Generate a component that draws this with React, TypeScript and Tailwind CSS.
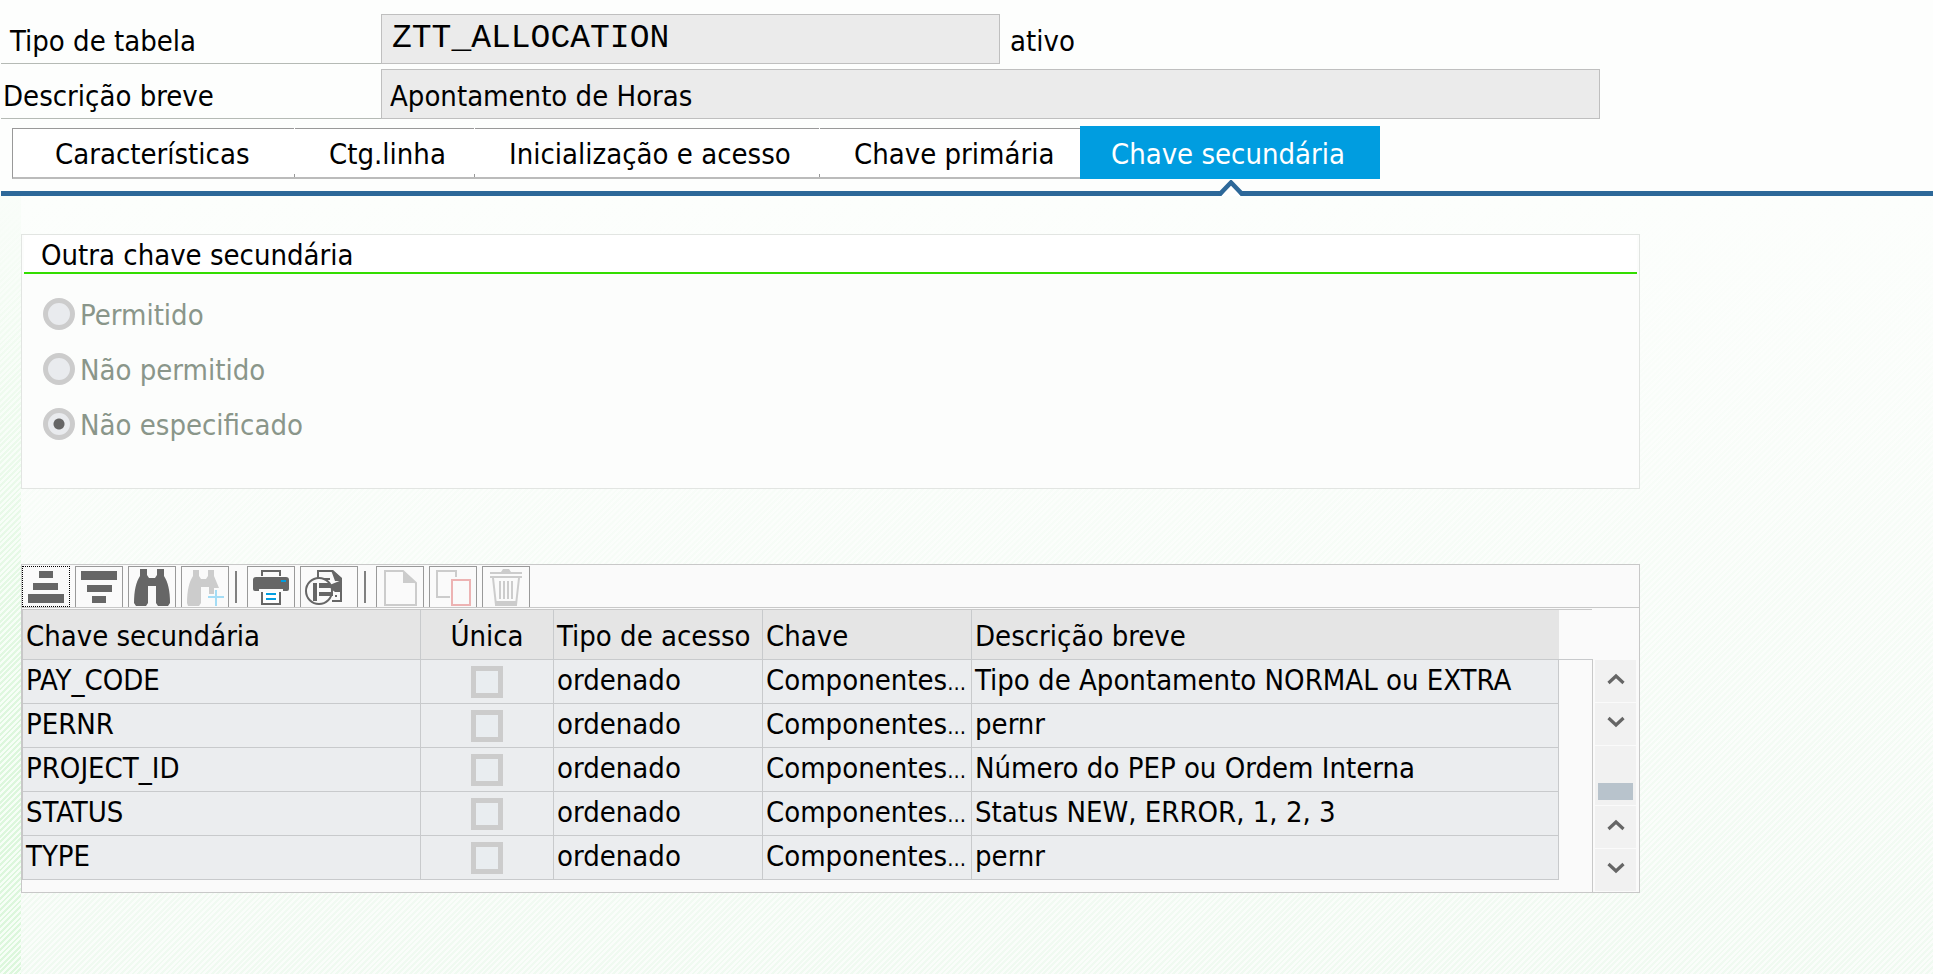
import type { ReactNode } from 'react';

const tabs = [
  { label: 'Características', cls: 'w-[282px] pl-[42px]' },
  { label: 'Ctg.linha', cls: 'w-[180px] pl-[35px]' },
  { label: 'Inicialização e acesso', cls: 'w-[345px] pl-[35px]' },
  { label: 'Chave primária', cls: 'w-[261px] pl-[35px]' },
];

const rows = [
  { key: 'PAY_CODE', text: 'Tipo de Apontamento NORMAL ou EXTRA' },
  { key: 'PERNR', text: 'pernr' },
  { key: 'PROJECT_ID', text: 'Número do PEP ou Ordem Interna' },
  { key: 'STATUS', text: 'Status NEW, ERROR, 1, 2, 3' },
  { key: 'TYPE', text: 'pernr' },
];

const options = ['Permitido', 'Não permitido', 'Não especificado'];

function ToolButton({ label, wide, focused, children }: { label: string; wide?: boolean; focused?: boolean; children: ReactNode }) {
  return (
    <button
      type="button"
      aria-label={label}
      className={`flex h-[41px] shrink-0 items-start justify-center border bg-[#fafafa] pt-[2px] ${wide ? 'w-[58px]' : 'w-[48px]'} ${
        focused ? 'border-dotted border-black' : 'border-b-0 border-[#999]'
      }`}
    >
      {children}
    </button>
  );
}

function Separator() {
  return <span className="ml-px mr-[5px] mt-[5px] h-8 w-[2px] shrink-0 bg-[#808080]" />;
}

function Icon({ children, wide }: { children: ReactNode; wide?: boolean }) {
  return (
    <svg viewBox={wide ? '0 0 48 38' : '0 0 38 38'} className={wide ? 'h-[38px] w-12' : 'h-[38px] w-[38px]'} fill="none" aria-hidden="true">
      {children}
    </svg>
  );
}

function Chevron({ up }: { up?: boolean }) {
  return (
    <svg viewBox="0 0 20 14" className="h-[14px] w-5" fill="none" stroke="#666" strokeWidth="3.2" aria-hidden="true">
      <path d={up ? 'M2.5 11 L10 4 L17.5 11' : 'M2.5 3 L10 10 L17.5 3'} />
    </svg>
  );
}

function ScrollButton({ up, label }: { up?: boolean; label: string }) {
  return (
    <button type="button" aria-label={label} className="flex h-[42px] w-full items-center justify-center bg-[#f1f1f1] pb-1">
      <Chevron up={up} />
    </button>
  );
}

function Toolbar() {
  return (
    <div className="flex h-[43px] items-start gap-[5px] border-b border-[#c8c8c8] bg-[#fafafa] pt-px">
      <ToolButton label="Ordenar crescente" focused>
        <Icon>
          <path fill="#666" d="M12 2h14v7H12zM6 14h25v7H6zM1 25h36v9H1z" />
        </Icon>
      </ToolButton>
      <ToolButton label="Ordenar decrescente">
        <Icon>
          <path fill="#666" d="M1 2h36v9H1zM7 16h25v7H7zM12 27h14v7H12z" />
        </Icon>
      </ToolButton>
      <ToolButton label="Procurar">
        <Icon>
          <path
            fill="#666"
            d="M7 0h7v6l2 3h6l2-3V0h7v7c4 6 6 15 6 27l-2 3H25l-2-3V17h-8v17l-2 3H3l-2-3C1 22 3 13 7 7z"
          />
        </Icon>
      </ToolButton>
      <ToolButton label="Continuar procura">
        <Icon>
          <path fill="#ccc" d="M7 1h6v6l2 3h5l2-3V1h6v6l5 12h-5v6h-5v-7h-8v16l-2 3H2l-1-3C1 22 3 13 7 7z" />
          <path stroke="#a3dcf5" strokeWidth="2" d="M30 21v16M22 28h16" />
        </Icon>
      </ToolButton>
      <Separator />
      <ToolButton label="Imprimir">
        <Icon>
          <path stroke="#666" strokeWidth="2" d="M10 7V2h18v5" />
          <path fill="#666" d="M1 11q0-3 3-3h30q3 0 3 3v9q0 2-2 2h-4v-2H7v2H3q-2 0-2-2z" />
          <path fill="#009de0" d="M29 11h5v2h-5z" />
          <path fill="#fff" d="M10 23h18v12H10z" />
          <path stroke="#666" strokeWidth="2" d="M10 23v12h18V23" />
          <path stroke="#009de0" strokeWidth="2" d="M14 25h10M14 30h10" />
        </Icon>
      </ToolButton>
      <ToolButton label="Visões" wide>
        <Icon wide>
          <path stroke="#666" strokeWidth="2" d="M13 10V2h14l9 8v22h-9" />
          <path fill="#666" d="M26 1l2 0l9 8v3h-7zM37 11v12h-7l-8-6z" />
          <path fill="#fafafa" d="M17 8h7v3h-7zM29 24h6v6h-6z" />
          <path stroke="#666" strokeWidth="2" d="M19 10h6M30 27h2" />
          <circle cx="14" cy="22" r="13" fill="#fafafa" stroke="#666" strokeWidth="2" />
          <path fill="#666" d="M8 14h4v18H8zM14 14h10l3 5H14zM14 23h14v4H14z" />
        </Icon>
      </ToolButton>
      <Separator />
      <ToolButton label="Criar">
        <Icon>
          <path stroke="#ccc" strokeWidth="2" d="M4 2h18l13 12v22H4z" />
          <path fill="#ccc" d="M22 2l13 12H22z" />
        </Icon>
      </ToolButton>
      <ToolButton label="Copiar">
        <Icon>
          <path stroke="#ccc" strokeWidth="2" d="M22 8V2H3v26h13" />
          <path stroke="#edb3b3" strokeWidth="2" d="M18 11h18v25H18z" />
        </Icon>
      </ToolButton>
      <ToolButton label="Eliminar">
        <Icon>
          <path stroke="#ccc" strokeWidth="2" d="M3 4h32M3 8h32M6 9l3 27h20l3-27M13 12v18M17 12v18M21 12v18M25 12v18" />
          <path fill="#ccc" d="M14 3l2-3h6l2 3zM8 32h22l-1 5H9z" />
        </Icon>
      </ToolButton>
    </div>
  );
}

const cell = 'border-r border-b border-[#c8cacc] p-0 pl-[3px]';

export default function App() {
  return (
    <div className="flex min-h-screen flex-col bg-[#fdfefd] font-['DejaVu_Sans_Condensed','DejaVu_Sans',sans-serif] text-[29px] leading-[34px] text-black">
      <header className="flex flex-col gap-[5px] pl-px pt-[14px]">
        <div className="flex h-[50px] items-stretch">
          <label htmlFor="tipo" className="w-[380px] shrink-0 border-b border-[#b5bab5] pl-[9px] pt-[10px]">
            Tipo de tabela
          </label>
          <input
            id="tipo"
            readOnly
            value="ZTT_ALLOCATION"
            className="w-[619px] rounded-none border border-[#bfbfbf] bg-[#ebebeb] px-[10px] font-['Liberation_Mono',monospace] text-[33px] outline-none"
          />
          <span className="pl-[10px] pt-[10px]">ativo</span>
        </div>
        <div className="flex h-[50px] items-stretch">
          <label htmlFor="descricao" className="w-[380px] shrink-0 border-b border-[#b5bab5] pl-[2px] pt-[10px]">
            Descrição breve
          </label>
          <input
            id="descricao"
            readOnly
            value="Apontamento de Horas"
            className="w-[1219px] rounded-none border border-[#bfbfbf] bg-[#ebebeb] px-2 pt-1 outline-none"
          />
        </div>
      </header>

      <nav role="tablist" className="mt-[7px] flex items-end pl-3">
        {tabs.map((t, i) => (
          <button
            key={t.label}
            type="button"
            role="tab"
            aria-selected="false"
            className={`relative flex h-[51px] items-center whitespace-nowrap border-t border-b-2 border-t-[#999] border-b-[#bbb] bg-white pt-[2px] text-left ${t.cls} ${
              i === 0 ? 'border-l border-l-[#999]' : ''
            }`}
          >
            {i > 0 && <span className="absolute bottom-0 left-0 h-[3px] w-px bg-[#999]" />}
            {i > 0 && <span className="absolute -top-px left-0 h-px w-px bg-white" />}
            {t.label}
          </button>
        ))}
        <button type="button" role="tab" aria-selected="true" className="flex h-[53px] w-[300px] items-center justify-center whitespace-nowrap bg-[#009de0] pr-1 pt-[2px] text-white">
          Chave secundária
        </button>
      </nav>
      <div className="relative ml-px mt-3 h-[5px] bg-[#2d6899]">
        <svg viewBox="0 0 26 16" className="absolute -top-[11px] left-[1217px] h-4 w-[26px]" fill="none" aria-hidden="true">
          <path fill="#fff" d="M3 16L13 4L23 16z" />
          <path stroke="#2d6899" strokeWidth="4.5" d="M1 15L13 2.5L25 15" />
        </svg>
      </div>

      <main className="flex grow bg-[#f9fdf9]">
        <div className="w-[21px] shrink-0 bg-[linear-gradient(to_bottom,#f9fdf9_0%,transparent_70%),repeating-linear-gradient(135deg,#dcf7dc_0px,#dcf7dc_2px,#f6fef6_2px,#f6fef6_4px)]" />
        <div className="grow bg-[linear-gradient(to_bottom,#fcfefc_0%,transparent_100%),repeating-linear-gradient(135deg,#f0faf1_0px,#f0faf1_2px,#fafdfa_2px,#fafdfa_4px)] pb-10 pt-[38px]">
          <fieldset className="flex h-[255px] max-w-[1619px] flex-col border border-[#e2e5e2] bg-[#fcfdfc]">
            <div className="mx-[2px] h-[39px] shrink-0 border-b-2 border-[#33dd00] bg-white pl-[17px] pt-[3px]" id="grupo">
              Outra chave secundária
            </div>
            <div role="radiogroup" aria-labelledby="grupo" className="flex flex-col pt-[13px]">
              {options.map((o, i) => (
                <label key={o} className="flex h-[55px] items-center gap-[5px] pl-[21px] text-[#8a968a]">
                  <input
                    type="radio"
                    name="chave"
                    disabled
                    defaultChecked={i === 2}
                    className="mb-[2px] h-8 w-8 appearance-none rounded-full border-[5px] border-[#ccc] bg-[#e9ebee] checked:bg-[radial-gradient(circle,#666_0px,#666_5px,#e9ebee_6px)]"
                  />
                  {o}
                </label>
              ))}
            </div>
          </fieldset>

          <section className="mt-[75px] max-w-[1619px] border border-[#c8c8c8] bg-[#fafafa]">
            <Toolbar />
            <div className="mt-px flex">
              <div className="grow">
                <table className="w-full table-fixed border-separate border-spacing-0 border-l border-t border-[#c8c8c8]">
                  <colgroup>
                    <col className="w-[398px]" />
                    <col className="w-[133px]" />
                    <col className="w-[209px]" />
                    <col className="w-[209px]" />
                    <col />
                    <col className="w-[33px]" />
                  </colgroup>
                  <thead>
                    <tr className="h-[50px] bg-[#e5e5e5] text-left whitespace-nowrap [&>th]:font-normal [&>th]:pt-[2px]">
                      <th className={cell}>Chave secundária</th>
                      <th className="border-r border-b border-[#c8cacc] p-0 text-center">Única</th>
                      <th className={cell}>Tipo de acesso</th>
                      <th className={cell}>Chave</th>
                      <th className="border-b border-[#c8cacc] p-0 pl-[3px]">Descrição breve</th>
                      <td className="border-b border-[#c8cacc] bg-[#fafafa] p-0" />
                    </tr>
                  </thead>
                  <tbody>
                    {rows.map((r) => (
                      <tr key={r.key} className="h-11 whitespace-nowrap bg-[#ebedef]">
                        <td className={`${cell} pb-1`}>{r.key}</td>
                        <td className="border-r border-b border-[#c8cacc] p-0 text-center">
                          <input
                            type="checkbox"
                            disabled
                            aria-label={`Única ${r.key}`}
                            className="mx-auto block h-8 w-8 appearance-none border-[5px] border-[#ccc] bg-[#e9edf0]"
                          />
                        </td>
                        <td className={`${cell} pb-1`}>ordenado</td>
                        <td className={`${cell} pb-1`}>
                          Componentes<span className="text-[22px] leading-none">...</span>
                        </td>
                        <td className={`${cell} pb-1`}>{r.text}</td>
                        <td className="bg-[#fafafa] p-0" />
                      </tr>
                    ))}
                  </tbody>
                </table>
                <div className="h-3" />
              </div>
              <div className="flex w-[47px] shrink-0 flex-col pt-[50px]">
                <div className="flex grow flex-col gap-px border-l border-[#c8c8c8] bg-[#fafafa] pb-px pl-[2px] pr-[3px] pt-px">
                  <ScrollButton up label="Linha anterior" />
                  <ScrollButton label="Linha seguinte" />
                  <div className="flex grow flex-col justify-end bg-[#f1f1f1] px-[3px] pb-[5px]">
                    <div className="h-[17px] bg-[#b8c3cc]" />
                  </div>
                  <ScrollButton up label="Página anterior" />
                  <ScrollButton label="Página seguinte" />
                </div>
              </div>
            </div>
          </section>
        </div>
      </main>
    </div>
  );
}
